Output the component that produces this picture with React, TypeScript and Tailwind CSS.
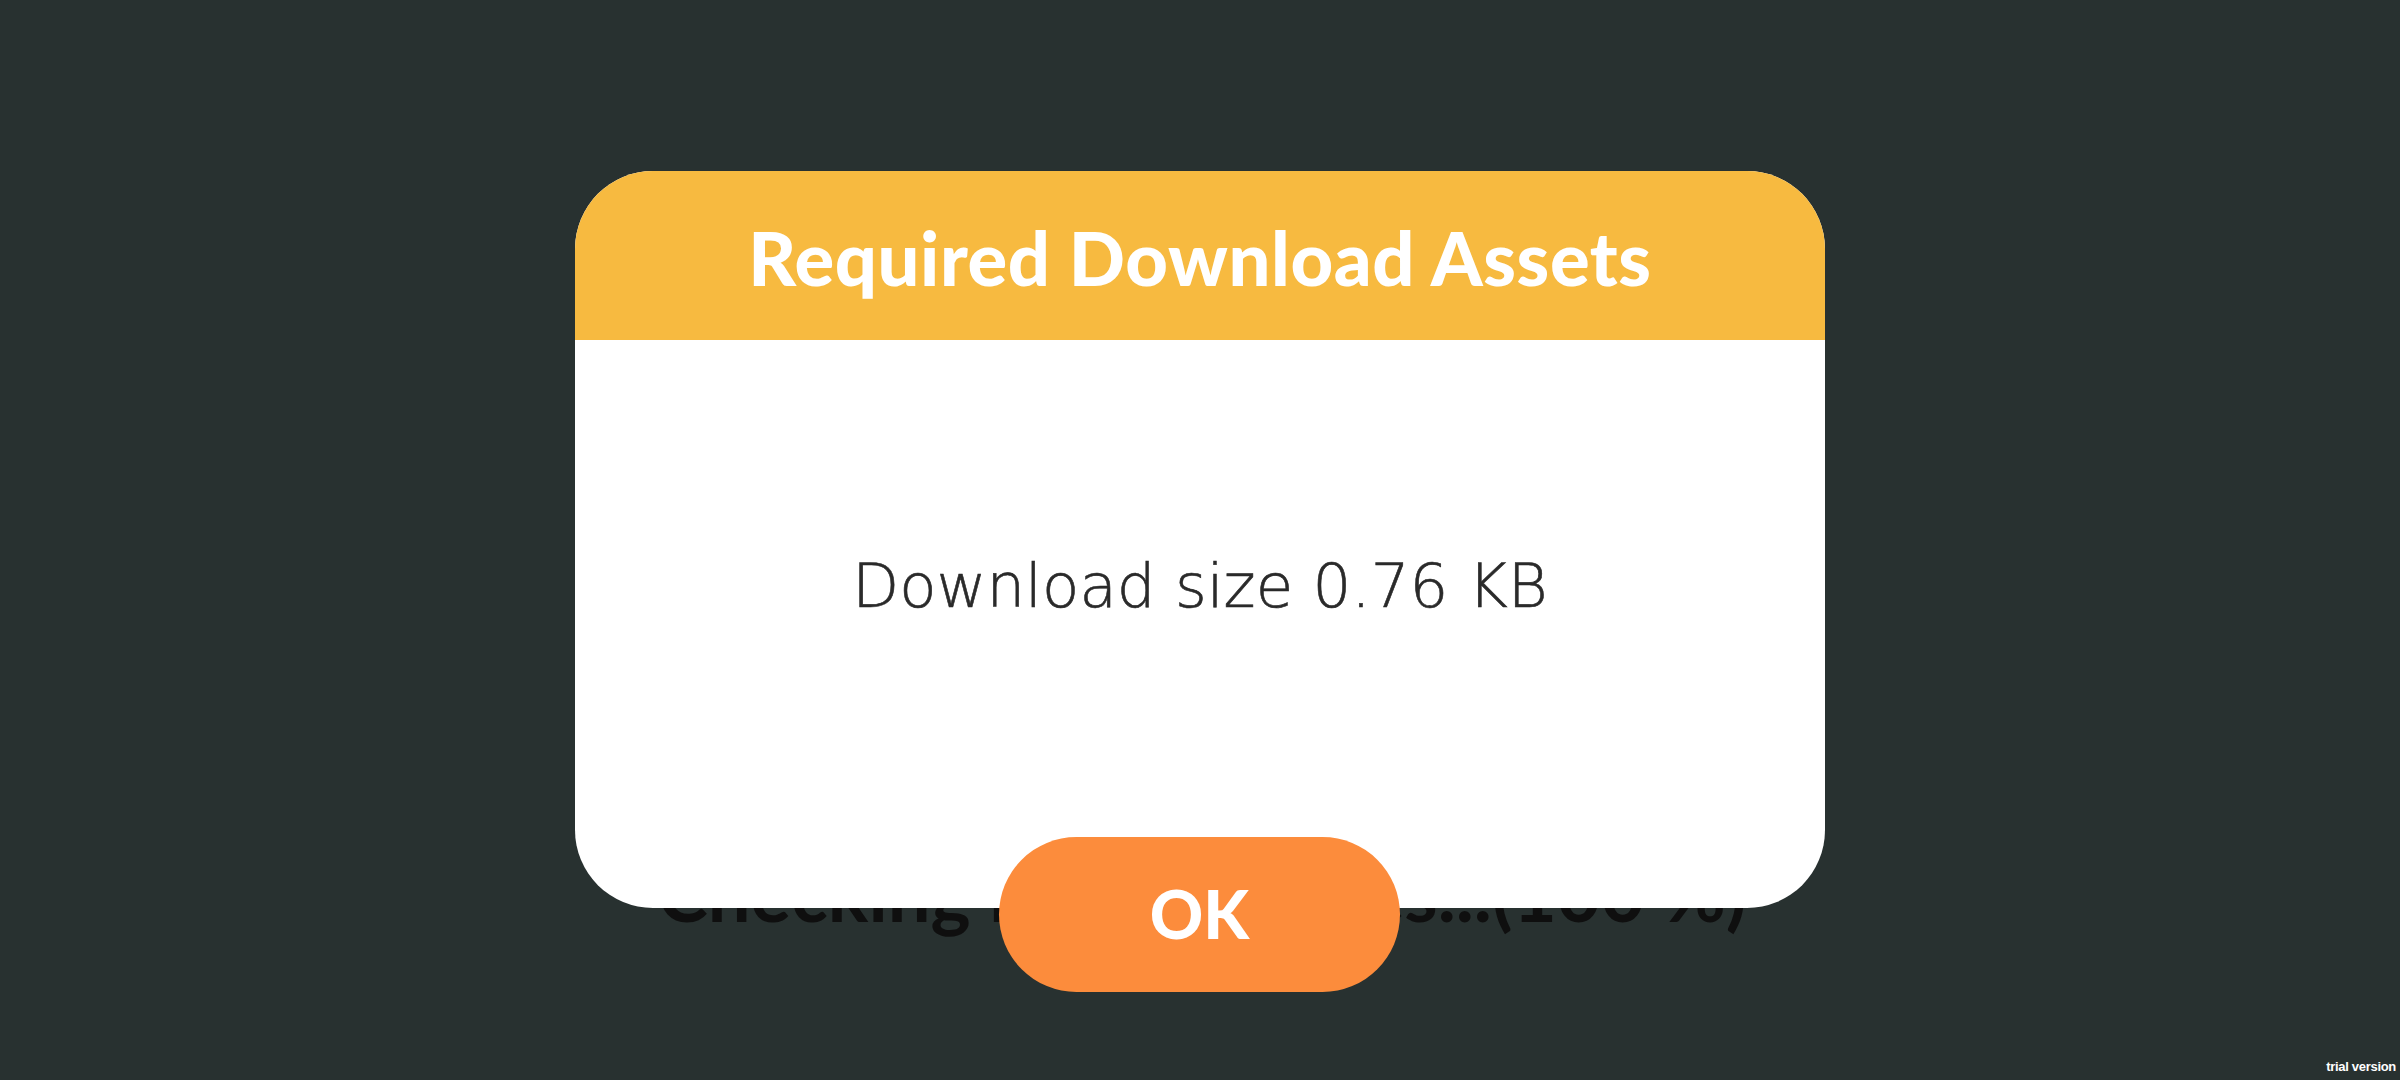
export default function App() {
  return (
    <div className="relative h-[1080px] w-[2400px] overflow-hidden bg-[#283130] font-['Lato',sans-serif]">
      <div className="flex justify-center pt-[853px]">
        <p className="text-[76px] font-bold leading-[80px] text-[#0f0f0f] pl-[4px]">
          Checking resource files...(100 %)
        </p>
      </div>

      <div className="absolute left-[575px] top-[171px] flex h-[737px] w-[1250px] flex-col overflow-hidden rounded-[78px] bg-white">
        <div className="flex h-[169px] items-center justify-center bg-[#F7BA40] pt-[4px]">
          <h1 className="text-[74px] font-black tracking-[0.6px] text-white">Required Download Assets</h1>
        </div>
        <div className="flex flex-1 items-start justify-center pt-[206px]">
          <p className="font-['DejaVu_Sans',sans-serif] text-[61px] font-extralight leading-[80px] text-[#2a2a2a] [-webkit-text-stroke:0.6px_#2a2a2a]">
            Download size 0.76 KB
          </p>
        </div>
      </div>

      <button className="absolute left-[999px] top-[837px] flex h-[155px] w-[401px] items-center justify-center rounded-full bg-[#FC8C3C] pb-[2px] text-[66px] font-black text-white">
        OK
      </button>

      <span className="absolute bottom-[4px] right-[4px] font-['Liberation_Sans',sans-serif] text-[13px] font-bold tracking-[-0.3px] text-white">
        trial version
      </span>
    </div>
  );
}
